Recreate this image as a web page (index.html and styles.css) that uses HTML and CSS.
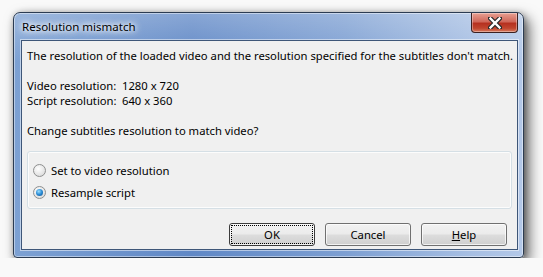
FILE: index.html
```html
<!DOCTYPE html>
<html lang="en">

<head>
    <meta charset="UTF-8">
    <title>Resolution mismatch</title>
    <link rel="stylesheet" href="styles.css">
</head>

<body>
    <div class="window">
        <div class="titlebar">
            <span class="title">Resolution mismatch</span>
            <div class="close-btn">
                <svg width="14" height="12" viewBox="0 0 14 12">
                    <path d="M2 1 L12 11 M12 1 L2 11" stroke="#2a2a2a" stroke-width="4.6" stroke-linecap="square"/>
                    <path d="M2.5 1.5 L11.5 10.5 M11.5 1.5 L2.5 10.5" stroke="#ffffff" stroke-width="2.4" stroke-linecap="square"/>
                </svg>
            </div>
        </div>
        <div class="client">
            <p>The resolution of the loaded video and the resolution specified for the subtitles don't match.</p>
            <div class="res-list">
                <div class="res-row">
                    <span class="label">Video resolution:</span>
                    <span>1280 x 720</span>
                </div>
                <div class="res-row">
                    <span class="label">Script resolution:</span>
                    <span>640 x 360</span>
                </div>
            </div>
            <p>Change subtitles resolution to match video?</p>
            <div class="group">
                <div class="radio-row">
                    <span class="radio"></span>
                    <span>Set to video resolution</span>
                </div>
                <div class="radio-row">
                    <span class="radio checked"></span>
                    <span>Resample script</span>
                </div>
            </div>
            <div class="buttons">
                <button class="btn default"><span class="focus">OK</span></button>
                <button class="btn">Cancel</button>
                <button class="btn"><u>H</u>elp</button>
            </div>
        </div>
    </div>
</body>

</html>
```

FILE: styles.css
```css
body {
    margin: 0;
    background-color: #f9f9f9;
    font-family: 'Noto Sans', 'Open Sans', sans-serif;
    font-size: 11.25px;
    color: #000;
}
.window {
    width: 509px;
    height: 244px;
    margin: 12px 0 0 13px;
    border: 1px solid #2c3c52;
    border-radius: 7px 7px 4px 4px;
    background:
        linear-gradient(to bottom, rgba(255, 255, 255, 0.25), rgba(255, 255, 255, 0) 20%),
        linear-gradient(to right, #7da1d3 0%, #6088c6 35%, #7d9fd2 65%, #a7bfe3 90%, #b3c8e8 100%);
    box-shadow: 5px 6px 14px rgba(0, 0, 0, 0.6), 1px 1px 6px rgba(0, 0, 0, 0.3), inset 0 0 0 1px rgba(255, 255, 255, 0.45);
    display: flex;
    flex-direction: column;
}
.titlebar {
    height: 27px;
    display: flex;
    align-items: flex-start;
}
.title {
    margin: 6px 0 0 8px;
    font-size: 11.5px;
    line-height: 16px;
    color: #000;
    text-shadow: 0 0 8px #fff, 0 0 8px #fff, 0 0 4px #fff;
}
.close-btn {
    margin-left: auto;
    margin-right: 5px;
    width: 45px;
    height: 19px;
    border: 1px solid #3b2020;
    border-top: none;
    border-radius: 0 0 4px 4px;
    background: linear-gradient(to bottom, #e8a093 0%, #d0685a 45%, #b63120 55%, #c0452e 80%, #d87a5e 100%);
    box-shadow: inset 0 0 0 1px rgba(255, 255, 255, 0.35);
    display: flex;
    align-items: center;
    justify-content: center;
}
.client {
    flex: 1;
    margin: 0 5px 7px 7px;
    padding: 7px 5px 0 5px;
    border: 1px solid #3e5678;
    background-color: #f0f0f0;
    box-shadow: 0 0 0 1px rgba(255, 255, 255, 0.5);
}
p {
    margin: 0 0 15px 0;
    line-height: 15px;
    white-space: nowrap;
}
.res-list {
    margin-bottom: 15px;
}
.res-row {
    display: flex;
    line-height: 15px;
}
.res-row .label {
    width: 95px;
}
.group {
    margin-top: -2px;
    padding: 7px 0 5px 5px;
    border: 1px solid #d5dfe5;
    border-radius: 3px;
    box-shadow: inset 0 0 0 1px #fcfcfc;
}
.radio-row {
    height: 22px;
    display: flex;
    align-items: center;
}
.radio {
    width: 11px;
    height: 11px;
    margin-right: 5px;
    border: 1px solid #8e8f8f;
    border-radius: 50%;
    background: radial-gradient(circle at 40% 35%, #ffffff, #dcdcdc 80%);
    position: relative;
}
.radio.checked::after {
    content: '';
    position: absolute;
    left: 2px;
    top: 2px;
    width: 7px;
    height: 7px;
    border-radius: 50%;
    background: radial-gradient(circle at 40% 35%, #9be0ff, #2a8ad4 50%, #0d4f8a 100%);
}
.buttons {
    display: flex;
    justify-content: flex-end;
    gap: 10px;
    margin-top: 14px;
    padding-right: 5px;
}
.btn {
    width: 86px;
    height: 23px;
    padding: 0;
    border: 1px solid #707070;
    border-radius: 3px;
    background: linear-gradient(to bottom, #f2f2f2 0%, #ebebeb 48%, #dddddd 52%, #cfcfcf 100%);
    box-shadow: inset 0 0 0 1px rgba(255, 255, 255, 0.7);
    font-family: 'Noto Sans', 'Open Sans', sans-serif;
    font-size: 11.25px;
    color: #000;
}
.btn.default {
    border-color: #3c3c3c;
    padding: 1px;
}
.btn .focus {
    display: flex;
    align-items: center;
    justify-content: center;
    height: 100%;
    border: 1px dotted #000;
    box-sizing: border-box;
}
```
